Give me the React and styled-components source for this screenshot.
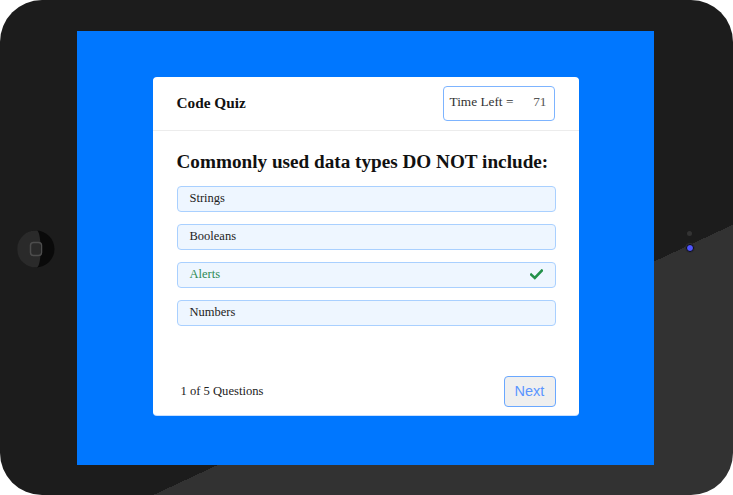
import React from "react";
import styled, { createGlobalStyle } from "styled-components";

const GlobalStyle = createGlobalStyle`
  html, body {
    margin: 0;
    padding: 0;
    background: #ffffff;
  }
  body {
    font-family: "Liberation Serif", "Times New Roman", serif;
  }
`;

const options = [
  { id: 1, text: "Strings" },
  { id: 2, text: "Booleans" },
  { id: 3, text: "Alerts", correct: true },
  { id: 4, text: "Numbers" },
];

const App = () => {
  return (
    <>
      <GlobalStyle />
      <Tablet>
        <LeftBezel>
          <HomeButton />
        </LeftBezel>
        <Screen>
          <Card>
            <CardHeader>
              <Brand>Code Quiz</Brand>
              <Timer>
                <span>Time Left =</span>
                <TimeValue>71</TimeValue>
              </Timer>
            </CardHeader>
            <CardBody>
              <Question>Commonly used data types DO NOT include:</Question>
              <OptionList>
                {options.map((opt) => (
                  <Option key={opt.id} correct={opt.correct}>
                    {opt.text}
                    {opt.correct && <CheckMark />}
                  </Option>
                ))}
              </OptionList>
            </CardBody>
            <CardFooter>
              <Progress>1 of 5 Questions</Progress>
              <NextButton>Next</NextButton>
            </CardFooter>
          </Card>
        </Screen>
        <RightBezel>
          <Sensor />
          <Camera />
        </RightBezel>
      </Tablet>
    </>
  );
};

export default App;

const HomeButton = () => (
  <svg width="38" height="38" viewBox="0 0 38 38">
    <circle cx="19" cy="19" r="18.5" fill="#0a0a0a" />
    <path d="M20 0.55 A18.5 18.5 0 1 0 20 37.45 A4 18.5 0 0 0 20 0.55 Z" fill="#2a2a2a" />
    <rect x="13.5" y="12.5" width="11" height="13" rx="3" fill="none" stroke="#4d4d4d" strokeWidth="1.5" />
  </svg>
);

const CheckMark = () => (
  <svg width="13" height="11" viewBox="0 0 13 11">
    <path d="M1.2 5.6 L4.8 9 L11.8 1.6" fill="none" stroke="#23914a" strokeWidth="2.6" strokeLinecap="square" />
  </svg>
);

const Tablet = styled.div`
  width: 733px;
  height: 495px;
  border-radius: 42px;
  background: linear-gradient(155deg, #1c1c1c 67.7%, #323232 67.7%);
  display: grid;
  grid-template-columns: 77px 577px 1fr;
  grid-template-rows: 434px;
  align-content: center;
  overflow: hidden;
`;

const LeftBezel = styled.div`
  display: flex;
  align-items: center;
  justify-content: center;
  padding-right: 5px;
  padding-top: 2px;
`;

const RightBezel = styled.div`
  display: flex;
  flex-direction: column;
  align-items: center;
  justify-content: center;
  gap: 8px;
  padding-right: 8px;
  padding-bottom: 12px;
`;

const Sensor = styled.div`
  width: 5px;
  height: 5px;
  border-radius: 50%;
  background: #333333;
`;

const Camera = styled.div`
  width: 6px;
  height: 6px;
  border-radius: 50%;
  background: #4f55ff;
  border: 1.5px solid #0c0c0c;
  box-shadow: 0 0 0 1px #2e2e2e;
`;

const Screen = styled.div`
  background: #0077ff;
  display: flex;
  align-items: center;
  justify-content: center;
  padding-bottom: 4px;
`;

const Card = styled.div`
  width: 426px;
  height: 338px;
  background: #ffffff;
  border-radius: 4px;
  box-shadow: 0 1px 0 #c9e0ff;
  display: flex;
  flex-direction: column;
`;

const CardHeader = styled.div`
  height: 53px;
  border-bottom: 1px solid #ececec;
  display: flex;
  align-items: center;
  justify-content: space-between;
  padding: 0 24px;
`;

const Brand = styled.h5`
  margin: 0;
  font-size: 15.3px;
  font-weight: bold;
  color: #111111;
`;

const Timer = styled.div`
  width: 112px;
  height: 35px;
  box-sizing: border-box;
  border: 1px solid #7db4ff;
  border-radius: 4px;
  display: flex;
  align-items: center;
  justify-content: space-between;
  padding: 0 7px 2px 6px;
  font-size: 13.3px;
  color: #333333;
`;

const TimeValue = styled.span`
  color: #555555;
`;

const CardBody = styled.div`
  flex: 1;
  padding: 19px 23px 0 24px;
`;

const Question = styled.h2`
  margin: 0 0 13px;
  font-size: 19.2px;
  line-height: 23px;
  font-weight: bold;
  color: #111111;
  white-space: nowrap;
`;

const OptionList = styled.div`
  display: flex;
  flex-direction: column;
  gap: 11.5px;
`;

const Option = styled.div`
  height: 26.5px;
  box-sizing: border-box;
  background: #eef6ff;
  border: 1px solid #a9d0ff;
  border-radius: 4px;
  display: flex;
  align-items: center;
  justify-content: space-between;
  padding: 0 12px 1px 12px;
  font-size: 12.5px;
  color: ${(p) => (p.correct ? "#2d8a55" : "#222222")};
`;

const CardFooter = styled.div`
  display: flex;
  align-items: center;
  justify-content: space-between;
  padding: 0 23px 8px 28px;
`;

const Progress = styled.span`
  font-size: 12.6px;
  color: #222222;
`;

const NextButton = styled.button`
  width: 52px;
  height: 31px;
  box-sizing: border-box;
  background: #efefef;
  border: 1px solid #6aa8ff;
  border-radius: 4px;
  font-family: "Liberation Sans", Arial, sans-serif;
  font-size: 14.5px;
  color: #5b95ff;
  padding: 0;
`;
